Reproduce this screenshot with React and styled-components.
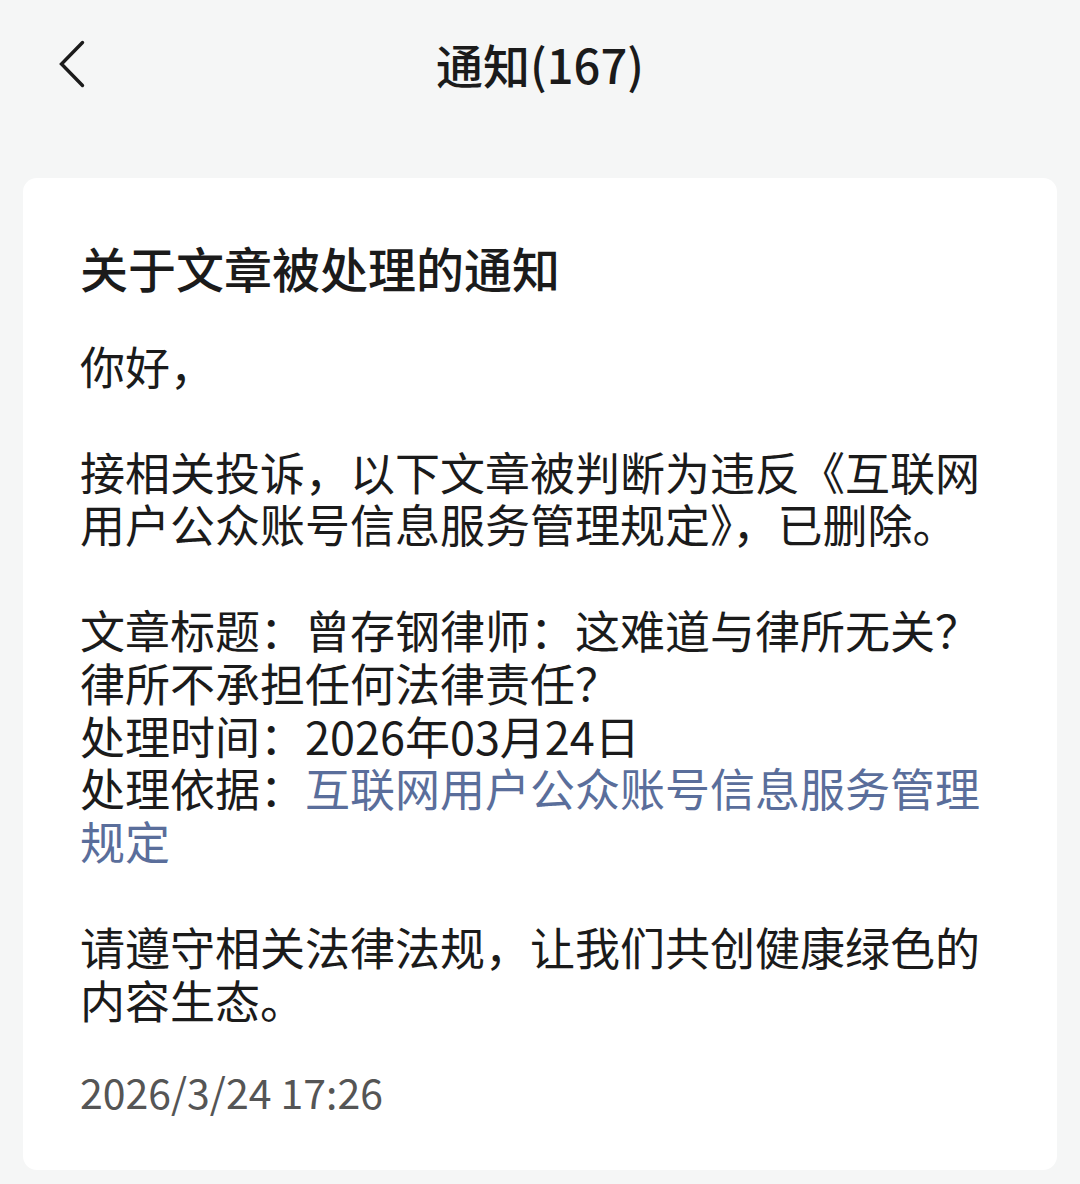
import React from "react";
import styled, { createGlobalStyle } from "styled-components";

const Global = createGlobalStyle`
  html, body {
    margin: 0;
    padding: 0;
    background: #f5f6f6;
  }
  body {
    font-family: "Noto Sans CJK SC", "Noto Sans", sans-serif;
    color: #1b1b1b;
  }
`;

const Page = styled.div`
  width: 1080px;
  min-height: 1184px;
  background: #f5f6f6;
  display: flex;
  flex-direction: column;
`;

const Header = styled.header`
  height: 136px;
  display: grid;
  grid-template-columns: 120px 1fr 120px;
  align-items: center;
`;

const BackButton = styled.button`
  border: 0;
  background: none;
  padding: 0 0 0 56px;
  margin: 0;
  height: 60px;
  display: flex;
  align-items: center;
  justify-self: start;
  margin-top: -8px;
  cursor: pointer;
`;

const HeaderTitle = styled.h1`
  margin: -8px 0 0;
  text-align: center;
  font-size: 47px;
  font-weight: 500;
  color: #1b1b1b;
  line-height: 60px;
`;

const Card = styled.article`
  margin: 42px 23px 13px;
  background: #ffffff;
  border-radius: 14px;
  padding: 57px 57px 54px;
  display: flex;
  flex-direction: column;
`;

const Title = styled.h2`
  margin: 0;
  font-size: 48px;
  font-weight: 500;
  line-height: 64px;
  color: #1b1b1b;
`;

const Body = styled.div`
  margin-top: 41px;
  font-size: 45px;
  line-height: 52.8px;
  color: #1b1b1b;
`;

const Para = styled.p`
  margin: 0 0 52.8px;
  &:last-child {
    margin-bottom: 0;
  }
`;

const Link = styled.a`
  color: #5a6e9b;
  text-decoration: none;
`;

const Time = styled.div`
  margin-top: 40px;
  font-size: 41px;
  line-height: 50px;
  color: #555555;
`;

const Chevron = () => (
  <svg width="30" height="50" viewBox="0 0 30 50" fill="none">
    <path
      d="M26.5 3.5 L5.5 25 L26.5 46.5"
      stroke="#1b1b1b"
      strokeWidth="3.4"
      strokeLinecap="round"
      strokeLinejoin="miter"
    />
  </svg>
);

export default function App() {
  return (
    <>
      <Global />
      <Page>
        <Header>
          <BackButton aria-label="返回">
            <Chevron />
          </BackButton>
          <HeaderTitle>通知(167)</HeaderTitle>
          <div />
        </Header>
        <Card>
          <Title>关于文章被处理的通知</Title>
          <Body>
            <Para>你好，</Para>
            <Para>
              接相关投诉，以下文章被判断为违反《互联网用户公众账号信息服务管理规定》，已删除。
            </Para>
            <Para>
              文章标题：曾存钢律师：这难道与律所无关？律所不承担任何法律责任？
              <br />
              处理时间：2026年03月24日
              <br />
              处理依据：<Link href="#">互联网用户公众账号信息服务管理规定</Link>
            </Para>
            <Para>请遵守相关法律法规，让我们共创健康绿色的内容生态。</Para>
          </Body>
          <Time>2026/3/24 17:26</Time>
        </Card>
      </Page>
    </>
  );
}
